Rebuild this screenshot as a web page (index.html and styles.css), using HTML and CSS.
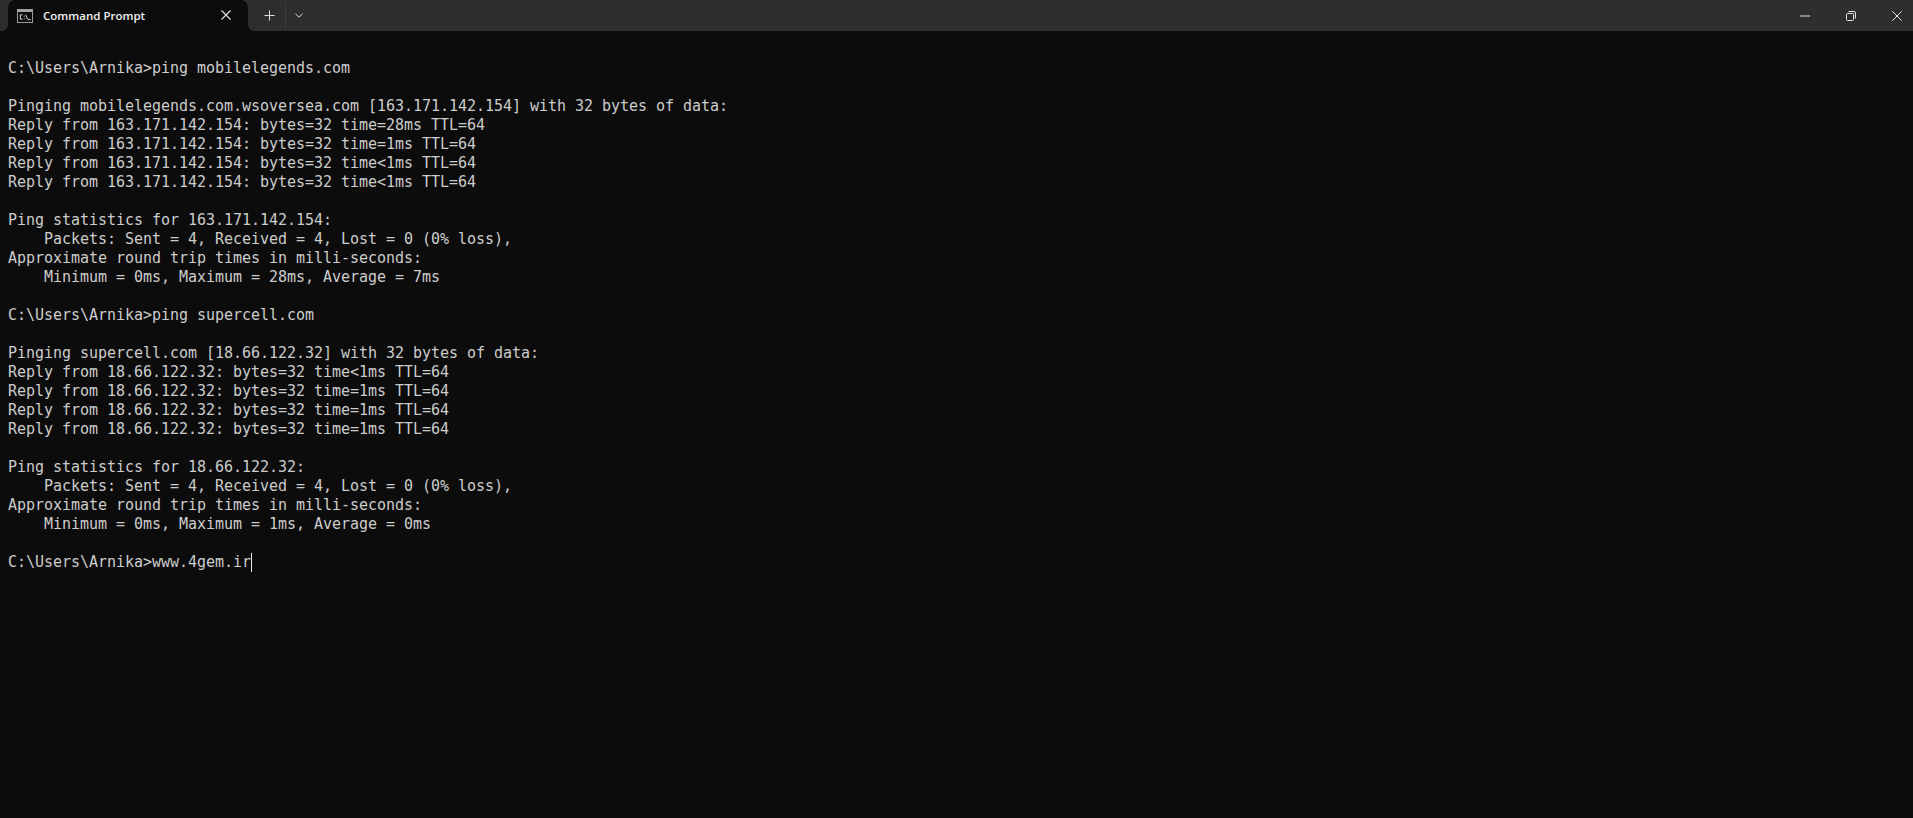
FILE: index.html
```html
<!DOCTYPE html>
<html lang="en">
<head>
<meta charset="utf-8">
<title>Command Prompt</title>
<link rel="stylesheet" href="styles.css">
</head>
<body>
<header class="titlebar">
  <div class="tab">
    <svg class="tab-icon" width="16" height="14" viewBox="0 0 16 14"><rect x="0.5" y="0.5" width="15" height="13" fill="#0c0c0c" stroke="#9a9a9a"/><rect x="1" y="1" width="14" height="2" fill="#a8a8a8"/><path d="M5.500 5.800H3.300v4.400h2.200M7.200 6.800v.9M7.200 9.300v.9M8.600 5.800l2 4.400M11 10.600h2.600" fill="none" stroke="#eee" stroke-width="0.9"/></svg>
    <span class="tab-title">Command Prompt</span>
    <svg class="tab-close" width="10" height="10" viewBox="0 0 10 10"><path d="M0.500 0.500l9 9M9.500 0.500l-9 9" stroke="#e6e6e6" stroke-width="1.100" fill="none"/></svg>
  </div>
  <div class="tab-actions">
    <svg width="11" height="11" viewBox="0 0 11 11"><path d="M5.500 0.500v10M0.500 5.500h10" stroke="#e0e0e0" stroke-width="1" fill="none"/></svg>
    <span class="divider"></span>
    <svg width="8" height="5" viewBox="0 0 8 5"><path d="M0.500 0.800L4 4.200L7.500 0.800" stroke="#d8d8d8" stroke-width="1" fill="none"/></svg>
  </div>
  <div class="window-controls">
    <svg width="10" height="2" viewBox="0 0 10 2"><path d="M0 1h10" stroke="#e6e6e6" stroke-width="1"/></svg>
    <svg width="10" height="10" viewBox="0 0 10 10"><rect x="0.500" y="2.500" width="7" height="7" rx="1" fill="none" stroke="#e6e6e6"/><path d="M2.500 0.500h5.500a1.500 1.500 0 0 1 1.500 1.500v5.500" fill="none" stroke="#e6e6e6"/></svg>
    <svg width="10" height="10" viewBox="0 0 10 10"><path d="M0.300 0.300l9.400 9.400M9.700 0.300l-9.400 9.400" stroke="#e6e6e6" stroke-width="1" fill="none"/></svg>
  </div>
</header>
<main class="console"><pre class="output">C:\Users\Arnika&gt;ping mobilelegends.com

Pinging mobilelegends.com.wsoversea.com [163.171.142.154] with 32 bytes of data:
Reply from 163.171.142.154: bytes=32 time=28ms TTL=64
Reply from 163.171.142.154: bytes=32 time=1ms TTL=64
Reply from 163.171.142.154: bytes=32 time&lt;1ms TTL=64
Reply from 163.171.142.154: bytes=32 time&lt;1ms TTL=64

Ping statistics for 163.171.142.154:
    Packets: Sent = 4, Received = 4, Lost = 0 (0% loss),
Approximate round trip times in milli-seconds:
    Minimum = 0ms, Maximum = 28ms, Average = 7ms

C:\Users\Arnika&gt;ping supercell.com

Pinging supercell.com [18.66.122.32] with 32 bytes of data:
Reply from 18.66.122.32: bytes=32 time&lt;1ms TTL=64
Reply from 18.66.122.32: bytes=32 time=1ms TTL=64
Reply from 18.66.122.32: bytes=32 time=1ms TTL=64
Reply from 18.66.122.32: bytes=32 time=1ms TTL=64

Ping statistics for 18.66.122.32:
    Packets: Sent = 4, Received = 4, Lost = 0 (0% loss),
Approximate round trip times in milli-seconds:
    Minimum = 0ms, Maximum = 1ms, Average = 0ms

C:\Users\Arnika&gt;www.4gem.ir<span class="cursor"></span></pre></main>
</body>
</html>
```

FILE: styles.css
```css
* { box-sizing: border-box; }
html, body { height: 100%; }
body {
  margin: 0;
  background: #0c0c0c;
  overflow: hidden;
  display: flex;
  flex-direction: column;
}
.titlebar {
  flex: none;
  height: 31px;
  background: #2e2e2e;
  display: flex;
  align-items: center;
  padding-left: 8px;
}
.tab {
  position: relative;
  width: 240px;
  height: 31px;
  background: #0c0c0c;
  border-radius: 7px 7px 0 0;
  display: flex;
  align-items: center;
  padding: 0 12px 0 9px;
}
.tab::before,
.tab::after {
  content: "";
  position: absolute;
  bottom: 0;
  width: 6px;
  height: 6px;
}
.tab::before {
  left: -6px;
  background: radial-gradient(circle at 0 0, transparent 5.500px, #0c0c0c 6px);
}
.tab::after {
  right: -6px;
  background: radial-gradient(circle at 100% 0, transparent 5.500px, #0c0c0c 6px);
}
.tab-icon { flex: none; }
.tab-title {
  margin-left: 10px;
  font: 600 11.5px "Open Sans", "Noto Sans", sans-serif;
  color: #f0f0f0;
  flex: 1;
}
.tab-close { flex: none; margin-right: 5px; margin-top: -2px; }
.tab-actions {
  display: flex;
  align-items: center;
  padding-left: 16px;
}
.divider {
  width: 1px;
  height: 24px;
  background: #3d3d3d;
  margin: 0 9px 0 10px;
}
.window-controls {
  margin-left: auto;
  display: flex;
  align-items: center;
  gap: 36px;
  padding-right: 11px;
}
.console {
  flex: 1;
  padding: 28px 0 0 8px;
  background: #0c0c0c;
}
.output {
  margin: 0;
  font: 15px/19px "DejaVu Sans Mono", "Liberation Mono", monospace;
  letter-spacing: -0.03px;
  color: #cccccc;
}
.cursor {
  display: inline-block;
  width: 1px;
  height: 19px;
  background: #e8e8e8;
  vertical-align: top;
}
```
